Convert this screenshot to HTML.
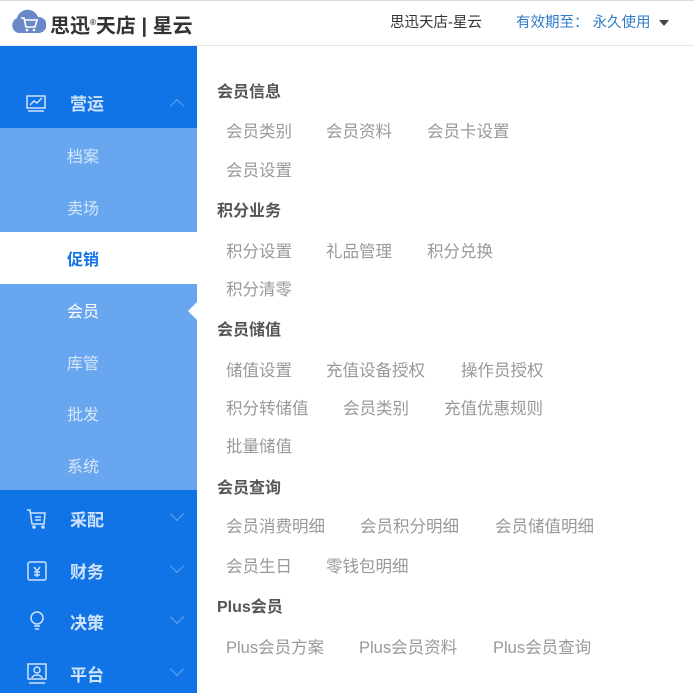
<!DOCTYPE html>
<html><head><meta charset="utf-8"><style>
*{margin:0;padding:0;box-sizing:border-box}
body{width:694px;height:693px;position:relative;overflow:hidden;background:#fff;font-family:"Liberation Sans","Noto Sans CJK SC",sans-serif}
.a{position:absolute;white-space:nowrap;line-height:20px}
.hd{position:absolute;left:0;top:0;width:694px;height:46px;background:#fff;border-top:1px solid #ddd;border-bottom:1px solid #e6e6e6}
.side{position:absolute;left:0;top:46px;width:197px;height:647px;background:#1174e6}
.sub{position:absolute;left:0;top:128px;width:197px;height:362px;background:#68a7ef}
.act{position:absolute;left:0;top:232px;width:197px;height:52px;background:#fff}
.m{color:#cfe2fb;font-weight:bold;font-size:17px;left:70px}
.s{color:#d6e6fa;font-size:16px;left:67px}
.h{color:#555;font-weight:bold;font-size:16px;left:217px}
.i{color:#999;font-size:16.5px}
.chev{position:absolute;width:10px;height:10px;border-left:1.5px solid #6aa5ee;border-top:1.5px solid #6aa5ee}
</style></head><body>
<div class="hd"></div>
<svg class="a" style="left:10px;top:9px" width="36" height="26" viewBox="0 0 36 26"><path d="M8 24 A8 8 0 0 1 7 9 A11 11 0 0 1 28 8 A8 8 0 0 1 29 24 Z" fill="#6a88c8"/><path d="M11 9 h3 l2 9 h9 l2-7 h-12" stroke="#fff" stroke-width="1.6" fill="none"/><circle cx="17" cy="21" r="1.3" fill="#fff"/><circle cx="24" cy="21" r="1.3" fill="#fff"/></svg>
<div class="a" style="left:50px;top:11px;font-size:20px;font-weight:bold;color:#333;line-height:24px">思迅<sup style="font-size:8px">®</sup>天店 | 星云</div>
<div class="a" style="left:390px;top:13px;font-size:14.5px;color:#333">思迅天店-星云</div>
<div class="a" style="left:516px;top:13px;font-size:14.5px;color:#2d7cc8">有效期至： 永久使用</div>
<svg class="a" style="left:659px;top:20px" width="10" height="6"><path d="M0 0h10L5 6z" fill="#444"/></svg>
<div class="side"></div><div class="sub"></div><div class="act"></div>
<svg class="a" style="left:187px;top:302px" width="10" height="18"><path d="M10 0L1 9l9 9z" fill="#fff"/></svg>
<svg class="a" style="left:26px;top:95px" width="20" height="18" fill="none" stroke="#cfe2fb" stroke-width="1.5"><rect x="1" y="1" width="18" height="12"/><path d="M4 10l4-4 3 2 5-5M2 16h16"/></svg>
<div class="a m" style="top:95px">营运</div>
<div class="chev" style="left:172px;top:101px;transform:rotate(45deg)"></div>
<div class="a s" style="top:148px">档案</div>
<div class="a s" style="top:200px">卖场</div>
<div class="a s" style="top:251px;color:#1174e6;font-weight:bold">促销</div>
<div class="a s" style="top:303px;color:#fff">会员</div>
<div class="a s" style="top:355px">库管</div>
<div class="a s" style="top:406px">批发</div>
<div class="a s" style="top:458px">系统</div>
<svg class="a" style="left:26px;top:508px" width="22" height="22" fill="none" stroke="#cfe2fb" stroke-width="1.5"><path d="M1 2h3l2 14h12l1-11H5"/><path d="M9 9h6M9 12h6"/><circle cx="8" cy="19" r="1"/><circle cx="17" cy="19" r="1"/></svg>
<div class="a m" style="top:511px">采配</div>
<svg class="a" style="left:27px;top:560px" width="20" height="22" fill="none" stroke="#cfe2fb" stroke-width="1.5"><rect x="1" y="2" width="18" height="18" rx="2"/><path d="M7 7l3 4 3-4M10 11v6M7 12h6M7 15h6"/></svg>
<div class="a m" style="top:563px">财务</div>
<svg class="a" style="left:27px;top:610px" width="20" height="22" fill="none" stroke="#cfe2fb" stroke-width="1.5"><circle cx="10" cy="8" r="6"/><path d="M7 16h6M8 19h4"/></svg>
<div class="a m" style="top:614px">决策</div>
<svg class="a" style="left:27px;top:662px" width="20" height="24" fill="none" stroke="#cfe2fb" stroke-width="1.5"><rect x="1" y="2" width="18" height="15"/><circle cx="10" cy="8" r="3"/><path d="M5 16c1-4 9-4 10 0M2 21h16"/></svg>
<div class="a m" style="top:666px">平台</div>
<div class="chev" style="left:172px;top:509px;transform:rotate(-135deg)"></div>
<div class="chev" style="left:172px;top:561px;transform:rotate(-135deg)"></div>
<div class="chev" style="left:172px;top:612px;transform:rotate(-135deg)"></div>
<div class="chev" style="left:172px;top:664px;transform:rotate(-135deg)"></div>

<div class="a h" style="top:83px">会员信息</div>
<div class="a i" style="left:226px;top:122px">会员类别</div>
<div class="a i" style="left:326px;top:122px">会员资料</div>
<div class="a i" style="left:427px;top:122px">会员卡设置</div>
<div class="a i" style="left:226px;top:161px">会员设置</div>
<div class="a h" style="top:202px">积分业务</div>
<div class="a i" style="left:226px;top:242px">积分设置</div>
<div class="a i" style="left:326px;top:242px">礼品管理</div>
<div class="a i" style="left:427px;top:242px">积分兑换</div>
<div class="a i" style="left:226px;top:280px">积分清零</div>
<div class="a h" style="top:321px">会员储值</div>
<div class="a i" style="left:226px;top:361px">储值设置</div>
<div class="a i" style="left:326px;top:361px">充值设备授权</div>
<div class="a i" style="left:461px;top:361px">操作员授权</div>
<div class="a i" style="left:226px;top:399px">积分转储值</div>
<div class="a i" style="left:343px;top:399px">会员类别</div>
<div class="a i" style="left:444px;top:399px">充值优惠规则</div>
<div class="a i" style="left:226px;top:437px">批量储值</div>
<div class="a h" style="top:479px">会员查询</div>
<div class="a i" style="left:226px;top:517px">会员消费明细</div>
<div class="a i" style="left:360px;top:517px">会员积分明细</div>
<div class="a i" style="left:495px;top:517px">会员储值明细</div>
<div class="a i" style="left:226px;top:557px">会员生日</div>
<div class="a i" style="left:326px;top:557px">零钱包明细</div>
<div class="a h" style="top:598px">Plus会员</div>
<div class="a i" style="left:226px;top:638px">Plus会员方案</div>
<div class="a i" style="left:359px;top:638px">Plus会员资料</div>
<div class="a i" style="left:493px;top:638px">Plus会员查询</div>
</body></html>
